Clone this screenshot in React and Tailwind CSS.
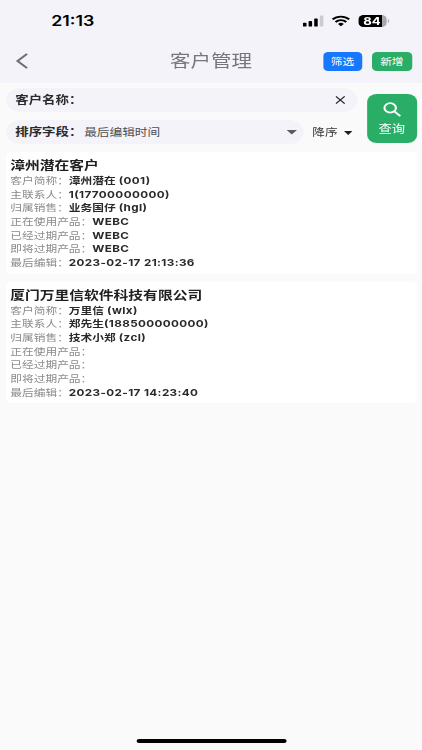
import React from 'react';

const customers = [
    {
        title: '漳州潜在客户',
        rows: [
            ['客户简称：', '漳州潜在', ' (001)'],
            ['主联系人：', '', '1(17700000000)'],
            ['归属销售：', '业务国仔', ' (hgl)'],
            ['正在使用产品：', '', 'WEBC'],
            ['已经过期产品：', '', 'WEBC'],
            ['即将过期产品：', '', 'WEBC'],
            ['最后编辑：', '', '2023-02-17 21:13:36'],
        ],
    },
    {
        title: '厦门万里信软件科技有限公司',
        rows: [
            ['客户简称：', '万里信', ' (wlx)'],
            ['主联系人：', '郑先生', '(188500000000)'],
            ['归属销售：', '技术小郑', ' (zcl)'],
            ['正在使用产品：', '', ''],
            ['已经过期产品：', '', ''],
            ['即将过期产品：', '', ''],
            ['最后编辑：', '', '2023-02-17 14:23:40'],
        ],
    },
];

const StatusBar = () => (
    <div className="flex h-[41px] items-center justify-between pl-[42px] pr-[27px]">
        <span className="pt-px text-[14.6px] font-semibold leading-none text-black">21:13</span>
        <div className="flex items-center">
            <svg className="h-[12px] w-[18px]" viewBox="0 0 18 12">
                <rect x="0.4" y="7.8" width="2.9" height="3.8" rx="0.7" />
                <rect x="5" y="6" width="2.9" height="5.6" rx="0.7" />
                <rect x="9.6" y="3.4" width="2.9" height="8.2" rx="0.7" />
                <rect x="14.2" y="0.4" width="2.9" height="11.2" rx="0.7" fill="#cbcbd0" />
            </svg>
            <svg className="ml-[6px] h-[12px] w-[15px]" viewBox="0 0 15 12" fill="none" stroke="black" strokeWidth="1.9">
                <path d="M0.7 4.4a9.6 9.6 0 0 1 13.6 0" />
                <path d="M3.1 7a6.2 6.2 0 0 1 8.8 0" />
                <path d="M7.5 11.3L5.1 8.9a3.4 3.4 0 0 1 4.8 0z" fill="black" stroke="none" />
            </svg>
            <div className="ml-[7px] flex h-[12px] w-[23px] items-center justify-center rounded-[4px] bg-linear-to-r from-black from-84% to-[#a9a9ad] to-84% pt-[3px] text-[10.8px] font-bold leading-none text-white">
                84
            </div>
            <div className="ml-px h-[4px] w-[1.5px] rounded-r-full bg-[#b5b5ba]" />
        </div>
    </div>
);

const Header = () => (
    <div className="relative flex h-[42px] items-center justify-between pb-[2px] pl-[13px] pr-[8.5px]">
        <svg className="h-[16px] w-[10px]" viewBox="0 0 10 16" fill="none" stroke="#707074" strokeWidth="1.9">
            <path d="M9.2 0.9L1.4 8l7.8 7.1" />
        </svg>
        <h1 className="absolute inset-x-0 text-center text-[16.8px] font-normal leading-[20px] text-[#77777b]">客户管理</h1>
        <div className="relative flex gap-[8px] text-[9.6px] leading-none text-white">
            <button className="h-[19px] w-[32.5px] rounded-[4px] bg-[#1677ff] pt-[2px]">筛选</button>
            <button className="h-[19px] w-[32.5px] rounded-[4px] bg-[#2aae67] pt-[2px]">新增</button>
        </div>
    </div>
);

const Caret = ({ className }) => (
    <svg className={className} viewBox="0 0 8 4" preserveAspectRatio="none" fill="currentColor">
        <path d="M0 0h8L4 4z" />
    </svg>
);

const SearchPanel = () => (
    <div className="flex h-[69px] pl-[5px] pr-[4.5px] pt-[5px]">
        <div className="flex w-[288px] flex-col gap-[8px]">
            <div className="flex h-[24px] items-center justify-between rounded-full bg-[#f4f3f9] pl-[7.5px] pr-[10px]">
                <span className="pt-px text-[11px] font-bold text-[#2b2b2d]">客户名称：</span>
                <svg className="h-[8px] w-[8px]" viewBox="0 0 8 8" stroke="#29292b" strokeWidth="1.15">
                    <path d="M0.4 0.4l7.2 7.2M7.6 0.4L0.4 7.6" />
                </svg>
            </div>
            <div className="flex h-[24px] items-center">
                <div className="flex h-[24px] w-[244px] items-center rounded-full bg-[#f4f3f9] pl-[7.5px] pr-[5.5px]">
                    <span className="pt-px text-[11px] font-bold text-[#2b2b2d]">排序字段：</span>
                    <span className="ml-[1.5px] pt-[2px] text-[10.4px] text-[#4f4f52]">最后编辑时间</span>
                    <Caret className="ml-auto mt-px h-[4.5px] w-[8.5px] text-[#5c5c60]" />
                </div>
                <span className="ml-[7px] pt-[2px] text-[10.4px] text-[#39393b]">降序</span>
                <Caret className="ml-[5px] mt-px h-[4px] w-[7px] text-[#202022]" />
            </div>
        </div>
        <button className="ml-auto mt-[6px] flex h-[48.5px] w-[40.5px] flex-col items-center rounded-[8px] bg-[#2aae67] pt-[8px] text-white">
            <svg className="h-[15px] w-[15px]" viewBox="0 0 15 15" fill="none" stroke="white" strokeWidth="1.7">
                <circle cx="5.9" cy="5.9" r="4.7" />
                <path d="M9.3 9.3l4.9 4.9" />
            </svg>
            <span className="mt-[5px] text-[10.9px] leading-[14px]">查询</span>
        </button>
    </div>
);

const CustomerCard = ({ customer }) => (
    <div className="h-[121.5px] rounded-[4px] bg-white pl-[3.5px] pt-[6px]">
        <h2 className="text-[12.1px] font-bold leading-[16px] text-[#202022]">{customer.title}</h2>
        {customer.rows.map(([label, name, detail]) => (
            <div key={label} className="flex h-[13.7px] items-center whitespace-pre text-[9.6px] leading-[13.7px]">
                <span className="text-[#8b8b8e]">{label}</span>
                <span className="font-bold text-[#29292b]">
                    {name}
                    <span className="tracking-[0.3px]">{detail}</span>
                </span>
            </div>
        ))}
    </div>
);

const App = () => {
    return (
        <div className="h-[750px] w-full overflow-hidden bg-[#fafafa]">
            <div className="flex h-[750px] w-[346px] origin-top-left scale-x-[1.2197] flex-col font-[Inter,'Noto_Sans_CJK_SC',sans-serif]">
                <div className="bg-[#f4f3f9]">
                    <StatusBar />
                    <Header />
                </div>
                <SearchPanel />
                <div className="flex flex-col gap-[8px] pl-[5px] pr-[4.5px]">
                    {customers.map((customer) => (
                        <CustomerCard key={customer.title} customer={customer} />
                    ))}
                </div>
                <div className="mx-auto mb-[7px] mt-auto h-[4px] w-[123px] rounded-full bg-black" />
            </div>
        </div>
    );
};

export default App;
